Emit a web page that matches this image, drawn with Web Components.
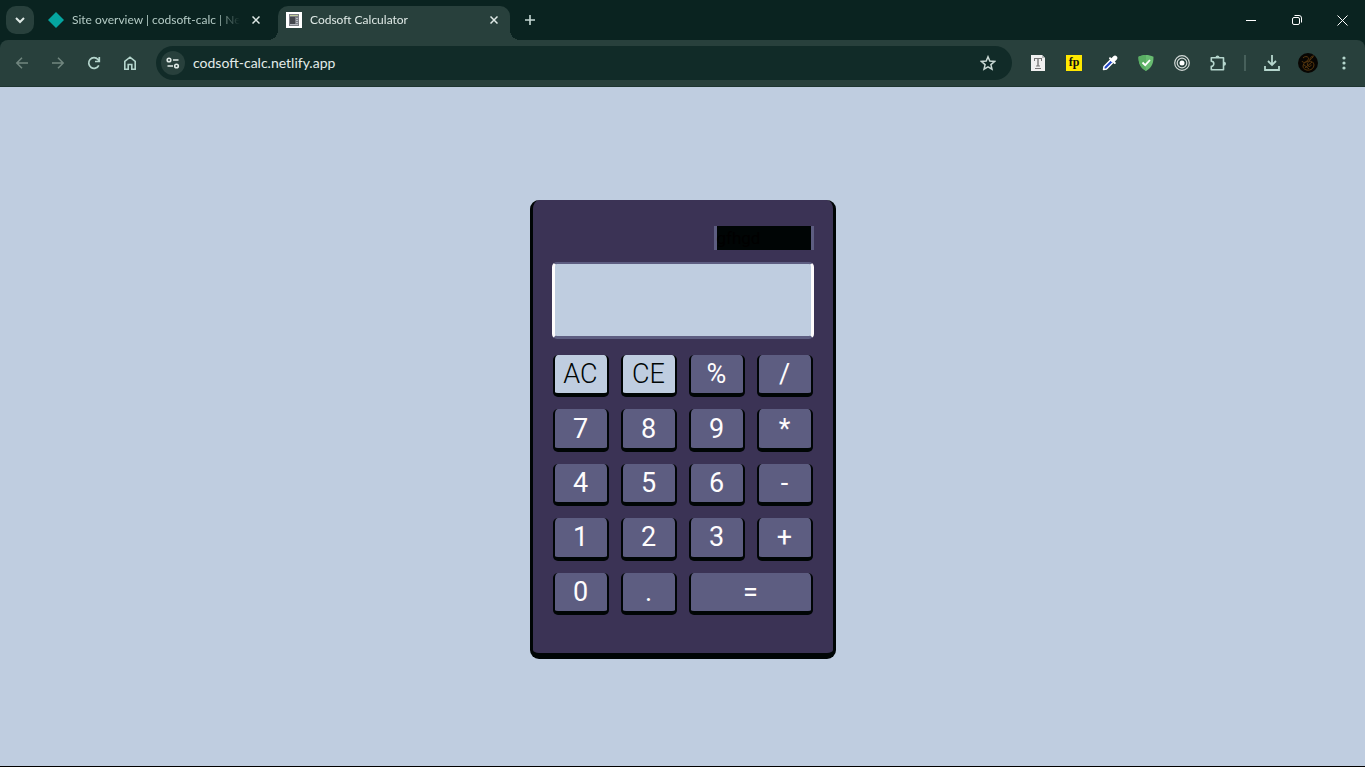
<!DOCTYPE html>
<html lang="en">
<head>
<meta charset="utf-8">
<title>Codsoft Calculator</title>
<style>
html, body { height: 100%; margin: 0; }
body { background: #bfcde0; font-family: Lato, "Open Sans", sans-serif; font-size: 12px; color: #e3ebe8; overflow: hidden; }
</style>
</head>
<body>
<browser-window>
  <tab-strip slot="tabs">
    <browser-tab label="Site overview | codsoft-calc | Ne">
      <svg width="16" height="16" viewBox="0 0 16 16" aria-hidden="true"><path d="M8 0 16 8 8 16 0 8Z" fill="#05a5a0"/></svg>
    </browser-tab>
    <browser-tab label="Codsoft Calculator" active>
      <svg width="16" height="16" viewBox="0 0 16 16" aria-hidden="true"><path fill="#fff" d="M0 0h16v16H0z"/><path fill="#7c7f86" d="M3 2h10v12H3z"/><path fill="#c3cf9c" d="M4 3h8v1H4z"/><path fill="#45484f" d="M4 5h5v7H4z"/><path fill="#b5b8c0" d="M10 6h2v1h-2zM10 8h2v1h-2zM10 10h2v1h-2zM4 12h8v1H4z"/></svg>
    </browser-tab>
  </tab-strip>
  <tool-bar slot="toolbar" address="codsoft-calc.netlify.app"></tool-bar>
  <calc-machine></calc-machine>
</browser-window>

<script>
const define = (name, html, setup) => {
  const template = document.createElement('template');
  template.innerHTML = html;
  customElements.define(name, class extends HTMLElement {
    constructor() {
      super();
      this.attachShadow({ mode: 'open' }).append(template.content.cloneNode(true));
    }
    connectedCallback() { if (setup) setup(this, this.shadowRoot); }
  });
};

define('browser-window', `
<style>
  :host { display: flex; flex-direction: column; min-height: 100vh; box-sizing: border-box; border-bottom: 1px solid #000; background: #0a2320; }
  main { flex: 1; display: grid; place-items: center; padding-top: 6px; background: #bfcde0; }
</style>
<slot name="tabs"></slot>
<slot name="toolbar"></slot>
<main><slot></slot></main>`);

define('icon-button', `
<style>
  :host { display: block; flex: none; }
  button { display: grid; place-items: center; width: var(--w, 36px); height: var(--h, 36px); padding: 0; border: 0; border-radius: var(--r, 0); background: var(--bg, none); color: inherit; }
</style>
<button type="button"><slot></slot></button>`, (host, root) => {
  root.querySelector('button').setAttribute('aria-label', host.getAttribute('label'));
});

define('browser-tab', `
<style>
  :host { display: flex; align-items: center; box-sizing: border-box; position: relative; flex: 0 1 232px; min-width: 0; height: 34px; padding: 0 6px 6px 8px; color: #b4cbc5; }
  :host([active]) { background: #28403c; border-radius: 10px 10px 0 0; color: #dfe9e6; }
  :host([active])::before, :host([active])::after { content: ""; position: absolute; bottom: 0; width: 10px; height: 10px; }
  :host([active])::before { right: 100%; background: radial-gradient(circle at 0 0, transparent 10px, #28403c 10px); }
  :host([active])::after { left: 100%; background: radial-gradient(circle at 100% 0, transparent 10px, #28403c 10px); }
  ::slotted(svg) { flex: none; }
  span { flex: 1; min-width: 0; margin: 0 6px 0 8px; line-height: 16px; white-space: nowrap; overflow: hidden; -webkit-mask-image: linear-gradient(90deg, #000 calc(100% - 24px), transparent); mask-image: linear-gradient(90deg, #000 calc(100% - 24px), transparent); }
  icon-button { --w: 20px; --h: 20px; color: #dfe9e6; }
</style>
<slot></slot><span></span>
<icon-button label="Close tab"><svg width="8" height="8" viewBox="0 0 8 8" fill="none" stroke="currentColor" stroke-width="1.5"><path d="M.5.5l7 7M7.5.5l-7 7"/></svg></icon-button>`, (host, root) => {
  root.querySelector('span').textContent = host.getAttribute('label');
});

define('tab-strip', `
<style>
  :host { display: flex; align-items: flex-start; height: 34px; padding: 6px 0 0 6px; background: #0a2320; }
  .search { --w: 28px; --h: 28px; --r: 10px; --bg: #28403c; margin-right: 6px; }
  .tabs { display: flex; flex: 0 1 470px; gap: 6px; min-width: 0; }
  .add { --w: 28px; --h: 28px; margin-left: 6px; color: #c5d8d3; }
  .controls { display: flex; margin-left: auto; margin-top: -6px; color: #fff; }
  .controls icon-button { --w: 46px; --h: 40px; }
  .controls icon-button:last-child { --w: 45px; }
</style>
<icon-button class="search" label="Search tabs"><svg width="10" height="10" viewBox="0 0 10 10" fill="none" stroke="#dfe9e6" stroke-width="2"><path d="M1 3l4 4 4-4"/></svg></icon-button>
<div class="tabs"><slot></slot></div>
<icon-button class="add" label="New tab"><svg width="10" height="10" viewBox="0 0 10 10" fill="none" stroke="currentColor" stroke-width="1.6"><path d="M5 0v10M0 5h10"/></svg></icon-button>
<div class="controls">
  <icon-button label="Minimize"><svg width="10" height="10" viewBox="0 0 10 10"><path fill="currentColor" d="M0 5h10v1H0z"/></svg></icon-button>
  <icon-button label="Restore"><svg width="10" height="10" viewBox="0 0 10 10" fill="none" stroke="currentColor"><rect x=".5" y="2.500" width="7" height="7" rx="1.500"/><path d="M2.500.500H7a2.500 2.500 0 0 1 2.500 2.500v4.500"/></svg></icon-button>
  <icon-button label="Close"><svg width="11" height="11" viewBox="0 0 11 11" fill="none" stroke="currentColor"><path d="M.5.5l10 10M10.5.5l-10 10"/></svg></icon-button>
</div>`);

define('tool-bar', `
<style>
  :host { display: flex; align-items: center; height: 46px; padding: 0 3px 0 4px; background: #28403c; border-bottom: 1px solid #1e3531; border-radius: 8px 8px 0 0; color: #b5d6cd; }
  .dim { color: #71867f; }
  .address { display: flex; align-items: center; flex: 1; min-width: 0; height: 34px; margin: 0 8px; padding: 0 6px 0 5px; box-sizing: border-box; border-radius: 17px; background: #112b28; }
  .site { --w: 24px; --h: 24px; --r: 12px; --bg: #28403c; color: #dfe9e6; }
  .star { color: #c9d8d4; }
  input { flex: 1; min-width: 0; height: 24px; margin: 0 8px; padding: 0; border: 0; outline: 0; background: none; color: #e3ebe8; font: 14px/24px Lato, "Open Sans", sans-serif; }
  i { flex: none; width: 2px; height: 16px; margin: 0 8px; background: #47605b; }
  text { font: bold 12px "Liberation Serif", serif; }
</style>
<icon-button class="dim" label="Back"><svg width="14" height="12" viewBox="0 0 14 12" fill="none" stroke="currentColor" stroke-width="1.5"><path d="M13 6H2M7 .800 1.800 6 7 11.200"/></svg></icon-button>
<icon-button class="dim" label="Forward"><svg width="14" height="12" viewBox="0 0 14 12" fill="none" stroke="currentColor" stroke-width="1.5"><path d="M1 6h11M7 .800 12.200 6 7 11.200"/></svg></icon-button>
<icon-button label="Reload"><svg width="14" height="14" viewBox="0 0 14 14" fill="none" stroke="currentColor" stroke-width="1.700"><path d="M11.800 9.300A5.300 5.300 0 1 1 11 3.500L12.300 5M12.300 1v4.500H8"/></svg></icon-button>
<icon-button label="Home"><svg width="14" height="14" viewBox="0 0 14 14" fill="none" stroke="currentColor" stroke-width="1.600"><path d="M1.800 5.300 7 1.200l5.200 4.100v7.900H8.800V8.500H5.200v4.700H1.800z"/></svg></icon-button>
<div class="address">
  <icon-button class="site" label="View site information"><svg width="14" height="12" viewBox="0 0 14 12" fill="none" stroke="currentColor" stroke-width="1.600"><circle cx="3" cy="3" r="1.800"/><path d="M7 3h5.500M1.500 9H7"/><circle cx="10.500" cy="9" r="1.800"/></svg></icon-button>
  <input type="text" aria-label="Address" spellcheck="false">
  <icon-button class="star" label="Bookmark this tab"><svg width="16" height="16" viewBox="0 0 16 16" fill="none" stroke="currentColor" stroke-width="1.500"><path d="M8 1.800l1.800 4.300 4.700.400-3.600 3.100 1.100 4.600L8 11.800l-4 2.400 1.100-4.600L1.500 6.500l4.700-.400z"/></svg></icon-button>
</div>
<icon-button label="Text extension"><svg width="16" height="16" viewBox="0 0 16 16"><path fill="#f0f0f0" d="M1 0h11l3 3v13H1z"/><path fill="#b9bcbc" d="M12 0v3h3z"/><path fill="#777" d="M4 3h8v3h-1V4H8.700v6.500H10v1H6v-1h1.300V4H5v2H4zM5 13h6v1H5z"/></svg></icon-button>
<icon-button label="Fonts extension"><svg width="16" height="16" viewBox="0 0 16 16"><path fill="#ffe800" d="M0 0h16v16H0z"/><text x="8" y="11" text-anchor="middle" fill="#111">fp</text></svg></icon-button>
<icon-button label="Color picker"><svg width="16" height="16" viewBox="0 0 16 16"><path d="M1.500 14.500 2 11.500l7-7 2.500 2.500-7 7z" fill="#2146c8" stroke="#fff" stroke-width="1.500" stroke-linejoin="round"/><path d="M8 3.200 12.800 8" stroke="#fff" stroke-width="2" stroke-linecap="round"/><path d="M11 5l2-2" stroke="#fff" stroke-width="4.600" stroke-linecap="round"/></svg></icon-button>
<icon-button label="Ad blocker"><svg width="16" height="16" viewBox="0 0 16 16"><path fill="#68bc71" d="M8 0c2.500 0 5 .600 7.500 1.800 0 5.500-1 10.500-7.500 14.200C1.500 12.300.500 7.300.500 1.800 3 .600 5.500 0 8 0z"/><path fill="#59ae63" d="M8 0v16C1.500 12.300.500 7.300.500 1.800 3 .600 5.500 0 8 0z"/><path d="M4.500 7.500l2.700 2.700L12 5" fill="none" stroke="#fff" stroke-width="1.800"/></svg></icon-button>
<icon-button label="Recorder"><svg width="16" height="16" viewBox="0 0 16 16" fill="none" stroke="#d3d9d7"><circle cx="8" cy="8" r="7.300" stroke-width="1.200"/><circle cx="8" cy="8" r="4.800" stroke-width="1.200"/><circle cx="8" cy="8" r="2.500" fill="#fff" stroke="none"/></svg></icon-button>
<icon-button label="Extensions"><svg width="16" height="16" viewBox="0 0 16 16" fill="none" stroke="currentColor" stroke-width="1.600"><path d="M1.300 2.800H13.500v11.900H1.300v-3.400a2.500 2.500 0 0 0 0-5z" stroke-linejoin="round"/><path d="M5.500 2.500a2 2 0 0 1 4 0zM14 6.800a2 2 0 0 1 0 4z" fill="currentColor" stroke="none"/></svg></icon-button>
<i></i>
<icon-button label="Downloads"><svg width="16" height="16" viewBox="0 0 16 16" fill="none" stroke="currentColor" stroke-width="1.800"><path d="M8 0v9.500M4 6l4 4 4-4M1 11v4h14v-4"/></svg></icon-button>
<icon-button label="Profile"><svg width="20" height="20" viewBox="0 0 20 20" fill="none" stroke="#59390f"><circle cx="10" cy="10" r="10" fill="#080603" stroke="none"/><path d="M16 3c-3 0-4 2-4 4M5 5c2-2.500 6-1.500 5.500 1S5 9 5 13s5 5 8 3.500 4-5.500 1.500-7.500-6 .500-5 3 4 1.500 3.500-.500M4 8c1 3 7 1 11-4M7 15l7-6M5 11l6 5"/></svg></icon-button>
<icon-button label="Menu"><svg width="4" height="16" viewBox="0 0 4 16" fill="currentColor"><circle cx="2" cy="3" r="1.600"/><circle cx="2" cy="8" r="1.600"/><circle cx="2" cy="13" r="1.600"/></svg></icon-button>`, (host, root) => {
  root.querySelector('input').value = host.getAttribute('address');
});

define('calc-key', `
<style>
  :host { display: grid; min-width: 0; min-height: 0; }
  button { box-sizing: border-box; width: 100%; height: 100%; min-height: 0; padding: 0; border: solid #000505; border-width: 0 2px 4px; border-radius: 5px; background: #5d5d81; color: #fefcfd; font: 400 27px/38px Roboto, sans-serif; }
  :host([kind="clear"]) button { background: #bfcde0; color: #000505; font-weight: 300; }
  :host([wide]) { grid-column: span 2; }
</style>
<button type="button"><slot></slot></button>`);

define('calc-machine', `
<style>
  :host { display: flex; flex-direction: column; width: 262px; padding: 26px 19px 38px; border: solid #000505; border-width: 0 3px 6px; border-radius: 9px; background: #3b3355; font-family: Roboto, sans-serif; }
  .solar { align-self: flex-end; box-sizing: border-box; width: 100px; height: 24px; border: solid #5d5d81; border-width: 0 3px; background: #000505; color: #000; font-size: 17px; line-height: 24px; }
  input { box-sizing: border-box; width: 100%; height: 77px; margin: 12px 0 16px; padding: 0 8px; border: solid #5d5d81; border-width: 2px 3px 3px; border-left-color: #fefcfd; border-right-color: #fefcfd; border-radius: 5px; outline: 0; background: #bfcde0; color: #000505; font: 300 32px Roboto, sans-serif; text-align: right; }
  .keys { display: grid; grid-template-columns: repeat(4, minmax(0, 1fr)); grid-template-rows: repeat(5, minmax(0, 1fr)); gap: 12px; height: 260px; margin: 0 1px; }
</style>
<div class="solar">gfhgd</div>
<input type="text" aria-label="Result" readonly>
<div class="keys">
  <calc-key kind="clear">AC</calc-key><calc-key kind="clear">CE</calc-key><calc-key>%</calc-key><calc-key>/</calc-key>
  <calc-key>7</calc-key><calc-key>8</calc-key><calc-key>9</calc-key><calc-key>*</calc-key>
  <calc-key>4</calc-key><calc-key>5</calc-key><calc-key>6</calc-key><calc-key>-</calc-key>
  <calc-key>1</calc-key><calc-key>2</calc-key><calc-key>3</calc-key><calc-key>+</calc-key>
  <calc-key>0</calc-key><calc-key>.</calc-key><calc-key wide>=</calc-key>
</div>`, (host, root) => {
  const screen = root.querySelector('input');
  root.querySelector('.keys').addEventListener('click', (event) => {
    const key = event.target.closest('calc-key');
    if (!key) return;
    const label = key.textContent;
    if (label === 'AC') screen.value = '';
    else if (label === 'CE') screen.value = screen.value.slice(0, -1);
    else if (label === '=') {
      try { screen.value = screen.value ? Function('return ' + screen.value)() : ''; }
      catch { screen.value = 'Error'; }
    } else screen.value += label;
  });
});
</script>
</body>
</html>
